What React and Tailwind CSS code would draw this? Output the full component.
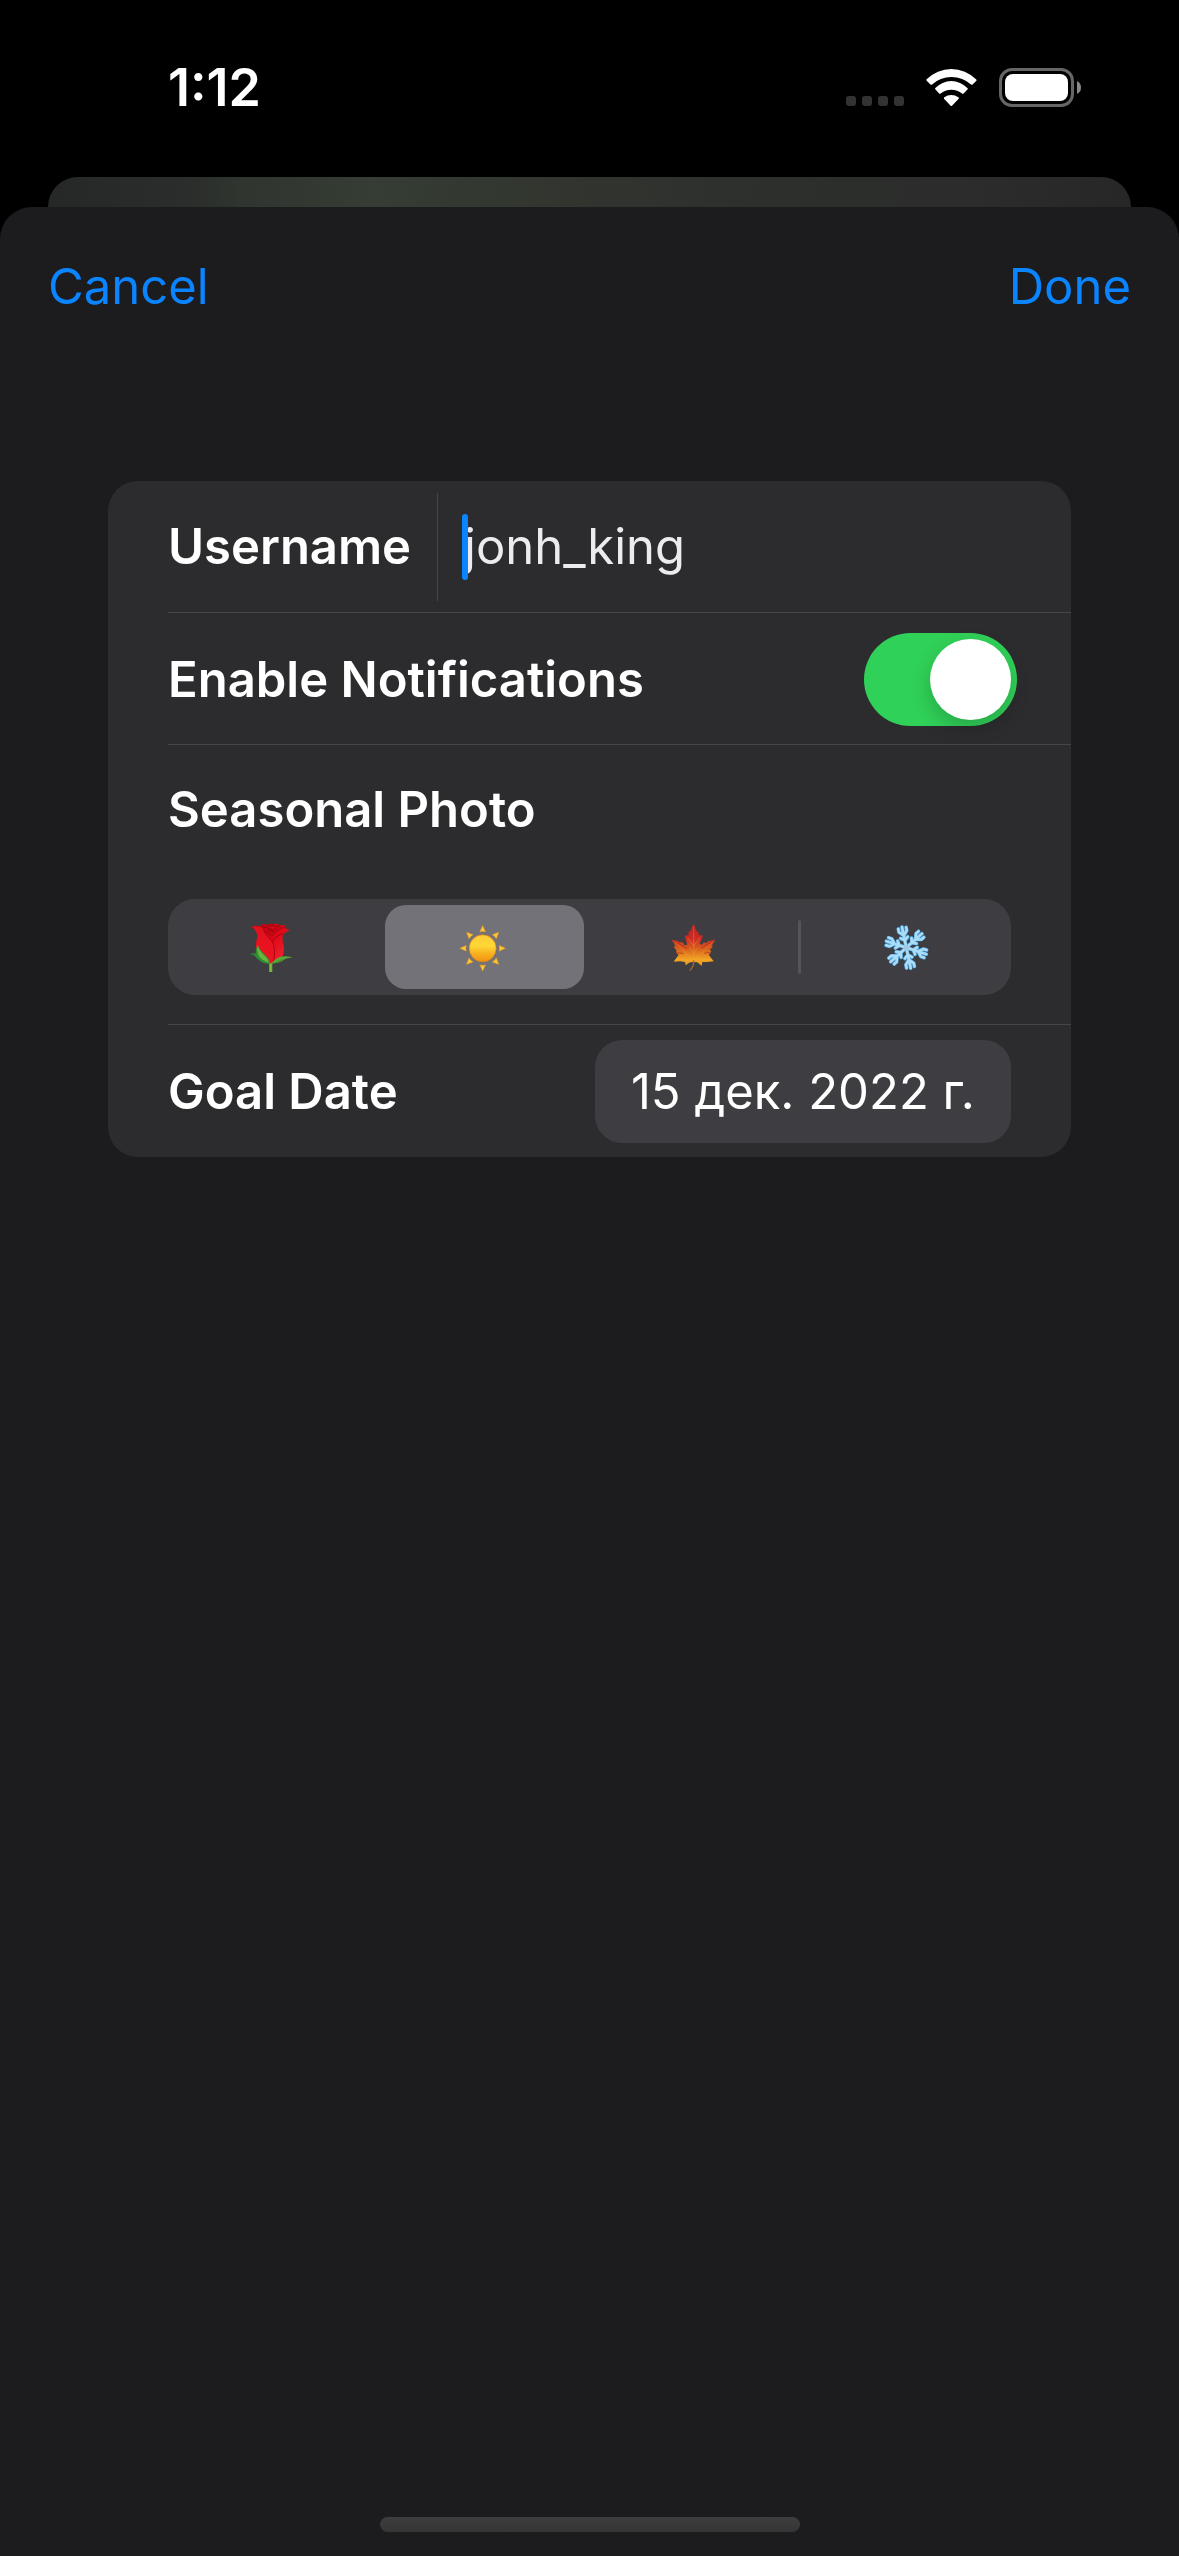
import React, { useState } from "react";

function Wifi() {
  return (
    <svg viewBox="318 57 153 111" className="h-[37px] w-[51px]" fill="#fff" aria-hidden="true">
      <path d="M320 92Q318 90 320 88A104 104 0 0 1 468 88Q471 90 469 92L457 104Q456 105 454 104A88 88 0 0 0 335 104Q333 105 332 104Z" />
      <path d="M346 118Q344 116 346 114A66 66 0 0 1 442 114Q445 116 443 118L430 131Q429 132 427 131A52 52 0 0 0 361 131Q359 132 358 131Z" />
      <path d="M372 146Q371 144 373 142A34 34 0 0 1 415 142Q418 144 416 146L396 167Q394 169 392 167Z" />
    </svg>
  );
}

function Battery() {
  return (
    <svg viewBox="0 0 82 39" className="h-[39px] w-[82px]" aria-hidden="true">
      <rect x="1.5" y="1.5" width="72" height="36" rx="11.5" fill="none" stroke="#666" strokeWidth="3" />
      <rect x="6" y="6" width="63" height="27" rx="8" fill="#fff" />
      <path d="M78 13Q82 15 82 19.5T78 26Z" fill="#888" />
    </svg>
  );
}

function Rose() {
  return (
    <svg viewBox="55 66 150 150" className="size-[50px]" aria-hidden="true">
      <defs>
        <linearGradient id="roseBud" x1="0" y1="0" x2="1" y2="1">
          <stop offset="0" stopColor="#b80410" />
          <stop offset="0.5" stopColor="#df0a18" />
          <stop offset="1" stopColor="#fb2a38" />
        </linearGradient>
        <linearGradient id="rosePetal" x1="0" y1="0" x2="0" y2="1">
          <stop offset="0" stopColor="#e3101c" />
          <stop offset="1" stopColor="#ee1424" />
        </linearGradient>
      </defs>
      <path d="M118 186H128V216H118Z" fill="#5fa82f" />
      <path d="M122 188H125V216H122Z" fill="#8ccb45" />
      <path d="M66 81Q78 74 94 78Q95 71 102 71L108 75Q120 70 132 72Q144 70 152 76Q162 74 167 78L164 84Q174 86 180 91Q166 96 160 104Q156 118 162 136Q165 156 158 170Q146 188 126 190Q98 190 84 166Q74 142 84 108Q80 88 66 81Z" fill="url(#roseBud)" />
      <path d="M66 81Q92 74 102 90Q116 112 126 122Q140 140 130 189Q98 190 84 166Q74 142 84 108Q80 88 66 81Z" fill="url(#rosePetal)" />
      <path d="M94 78Q100 94 128 112Q140 92 164 84L167 78Q146 80 134 92Q126 82 108 78Z" fill="#c20612" />
      <path d="M96 79Q110 78 126 92M152 76Q136 80 128 96M116 76Q132 74 142 80" fill="none" stroke="#8f020b" strokeWidth="2.5" />
      <path d="M102 92Q112 110 126 122Q140 142 131 188M162 100Q142 104 128 122" fill="none" stroke="#9a020d" strokeWidth="2.5" />
      <path d="M84 134Q90 150 106 164Q120 176 122 191Q104 194 90 182Q78 174 75 167Q68 163 60 163Q68 157 77 161Q78 146 84 134Z" fill="#2f8a35" />
      <path d="M84 136Q90 156 106 168Q116 178 119 189Q96 182 86 166Q80 150 84 136Z" fill="#69b53b" />
      <path d="M124 191Q134 178 150 171Q168 166 189 173Q176 173 166 177Q150 191 124 191Z" fill="#5aa636" />
      <path d="M128 190Q144 188 162 174Q150 190 128 190Z" fill="#2c7a2c" />
    </svg>
  );
}

function Sun() {
  return (
    <svg viewBox="57 66 150 150" className="size-[50px]" aria-hidden="true">
      <defs>
        <linearGradient id="sunDisc" x1="0" y1="0" x2="0" y2="1">
          <stop offset="0" stopColor="#ffc936" />
          <stop offset="0.4" stopColor="#fed936" />
          <stop offset="0.7" stopColor="#f8b020" />
          <stop offset="1" stopColor="#ef9412" />
        </linearGradient>
      </defs>
      {[0, 45, 90, 135, 180, 225, 270, 315].map((a) => (
        <path key={a} d="M128 76L137 96Q128 93 119 96Z" transform={`rotate(${a} 128 145)`} fill="#fcc637" stroke="#d9861c" strokeWidth="1.2" />
      ))}
      <circle cx="128" cy="145" r="40.5" fill="url(#sunDisc)" stroke="#d97a10" strokeWidth="1.8" />
    </svg>
  );
}

function Leaf() {
  return (
    <svg viewBox="60 66 150 150" className="size-[50px]" aria-hidden="true">
      <defs>
        <linearGradient id="leafBody" x1="0" y1="0" x2="0" y2="1">
          <stop offset="0" stopColor="#b3241b" />
          <stop offset="0.35" stopColor="#cf2a25" />
          <stop offset="0.6" stopColor="#d8601f" />
          <stop offset="0.85" stopColor="#f2a623" />
          <stop offset="1" stopColor="#e8931f" />
        </linearGradient>
      </defs>
      <path d="M131 70L120 94L115 96L116 106L104 107L112 134L103 135L99 127L88 127L84 123L65 119L75 136L72 142L80 152L78 158L86 164L71 185L90 184L105 186L107 196L120 187L130 186L142 187L155 198L157 186L172 186L191 184L176 164L184 155L180 148L188 142L186 136L196 119L174 124L170 129L161 127L156 134L149 132L159 107L147 105L145 96L139 92Z" fill="url(#leafBody)" />
      <path d="M131 78V182L73 124M131 182L190 124M131 182L80 178M131 182L184 178M131 138L113 114M131 138L149 114M131 160L118 142M131 160L144 142" fill="none" stroke="#f3a13a" strokeOpacity="0.55" strokeWidth="2" />
      <path d="M72 122L112 146M190 122L154 144M78 158L100 160M184 156L162 160" fill="none" stroke="#a32415" strokeOpacity="0.6" strokeWidth="3" />
      <path d="M131 180Q134 197 119 212" fill="none" stroke="#b0652a" strokeWidth="3.5" />
    </svg>
  );
}

const ARM = "M138 142V80M138 106L126 93V83M138 106L150 93V83M138 121L127 112M138 121L149 112";

function Snow() {
  const angles = [-12, 48, 108, 168, 228, 288];
  return (
    <svg viewBox="62 66 150 150" className="size-[50px]" strokeLinecap="round" strokeLinejoin="round" fill="none" aria-hidden="true">
      {angles.map((a) => (
        <path key={a} d={ARM} transform={`rotate(${a} 138 143)`} stroke="#55ade9" strokeWidth="11" />
      ))}
      {angles.map((a) => (
        <path key={a} d={ARM} transform={`rotate(${a} 138 143)`} stroke="#a9dcf7" strokeWidth="7.5" />
      ))}
      <circle cx="138" cy="143" r="8" fill="#a5c6dc" />
    </svg>
  );
}

const SEASONS = [
  { id: "spring", label: "Spring", Icon: Rose },
  { id: "summer", label: "Summer", Icon: Sun },
  { id: "autumn", label: "Autumn", Icon: Leaf },
  { id: "winter", label: "Winter", Icon: Snow },
];

export default function App() {
  const [name, setName] = useState("jonh_king");
  const [notify, setNotify] = useState(true);
  const [season, setSeason] = useState("summer");
  const selected = SEASONS.findIndex((s) => s.id === season);

  return (
    <div className="flex min-h-screen flex-col bg-black font-['Inter','Noto_Sans',sans-serif] text-[49px] leading-none text-white">
      <header className="flex h-[177px] items-center justify-between pr-[98px] pb-0.5 pl-[168px]">
        <time className="text-[52px] font-semibold">1:12</time>
        <div className="flex items-center gap-[22px]">
          <div className="flex h-[37px] items-end gap-1.5">
            {[0, 1, 2, 3].map((i) => (
              <span key={i} className="size-2.5 rounded-[3px] bg-[#333]" />
            ))}
          </div>
          <Wifi />
          <Battery />
        </div>
      </header>

      <div className="mx-12 h-[30px] rounded-t-[30px] bg-[linear-gradient(90deg,#262828_0%,#2a2d2b_13%,#30352f_18%,#353d34_30%,#333931_38%,#31342e_51%,#2d302d_62%,#2b2c2b_85%,#272728_100%)]" />

      <main className="flex flex-1 flex-col rounded-t-[32px] bg-[#1c1c1e]">
        <nav className="flex h-[158px] items-center justify-between px-12 text-[#0a84ff]">
          <button type="button">Cancel</button>
          <button type="button">Done</button>
        </nav>

        <form className="mx-[108px] mt-[116px] rounded-[30px] bg-[#2c2c2e] pl-[60px]" onSubmit={(e) => e.preventDefault()}>
          <div className="flex h-[132px] items-center border-b border-[#464649]">
            <label htmlFor="username" className="font-semibold">Username</label>
            <div className="ml-[26px] h-[108px] w-px bg-[#464649]" />
            <div className="relative ml-6 flex-1">
              <input
                id="username"
                value={name}
                onChange={(e) => setName(e.target.value)}
                className="h-[66px] w-full bg-transparent pl-0.5 text-[#ebebf0] outline-none"
              />
              <span className="absolute top-0 left-0 h-[66px] w-1.5 rounded-full bg-[#0a84ff]" />
            </div>
          </div>

          <div className="flex h-[132px] items-center justify-between border-b border-[#464649] pt-0.5 pr-[54px]">
            <label htmlFor="notify" className="font-semibold">Enable Notifications</label>
            <input
              id="notify"
              type="checkbox"
              role="switch"
              checked={notify}
              onChange={(e) => setNotify(e.target.checked)}
              className="flex h-[93px] w-[153px] appearance-none rounded-full bg-[#39393d] p-1.5 before:size-[81px] before:rounded-full before:bg-white before:shadow-[0_8px_20px_rgba(0,0,0,0.2)] checked:justify-end checked:bg-[#30d158]"
            />
          </div>

          <fieldset className="h-[280px] border-b border-[#464649]">
            <legend className="flex h-[128px] items-center font-semibold">Seasonal Photo</legend>
            <div className="mt-[26px] mr-[60px] grid h-24 grid-cols-4 rounded-[27px] bg-[#3e3d42]">
              {SEASONS.map(({ id, label, Icon }, i) => (
                <label key={id} className="relative grid place-items-center p-1.5">
                  <input
                    type="radio"
                    name="season"
                    aria-label={label}
                    checked={season === id}
                    onChange={() => setSeason(id)}
                    className="col-start-1 row-start-1 size-full appearance-none rounded-[21px] checked:bg-[#737278]"
                  />
                  <span className="col-start-1 row-start-1">
                    <Icon />
                  </span>
                  {i > 0 && i !== selected && i !== selected + 1 && (
                    <span className="absolute top-[21px] left-[-2px] h-[54px] w-[3px] rounded-full bg-[#555459]" />
                  )}
                </label>
              ))}
            </div>
          </fieldset>

          <div className="flex h-[132px] items-center justify-between pr-[60px]">
            <label htmlFor="goal" className="font-semibold">Goal Date</label>
            <button id="goal" type="button" className="h-[103px] rounded-[27px] bg-[#3e3d42] px-9">
              15 дек. 2022 г.
            </button>
          </div>
        </form>

        <div className="mx-auto mt-auto mb-6 h-[15px] w-[420px] rounded-full bg-linear-to-b from-[#3d3d3d] to-[#353535]" />
      </main>
    </div>
  );
}
